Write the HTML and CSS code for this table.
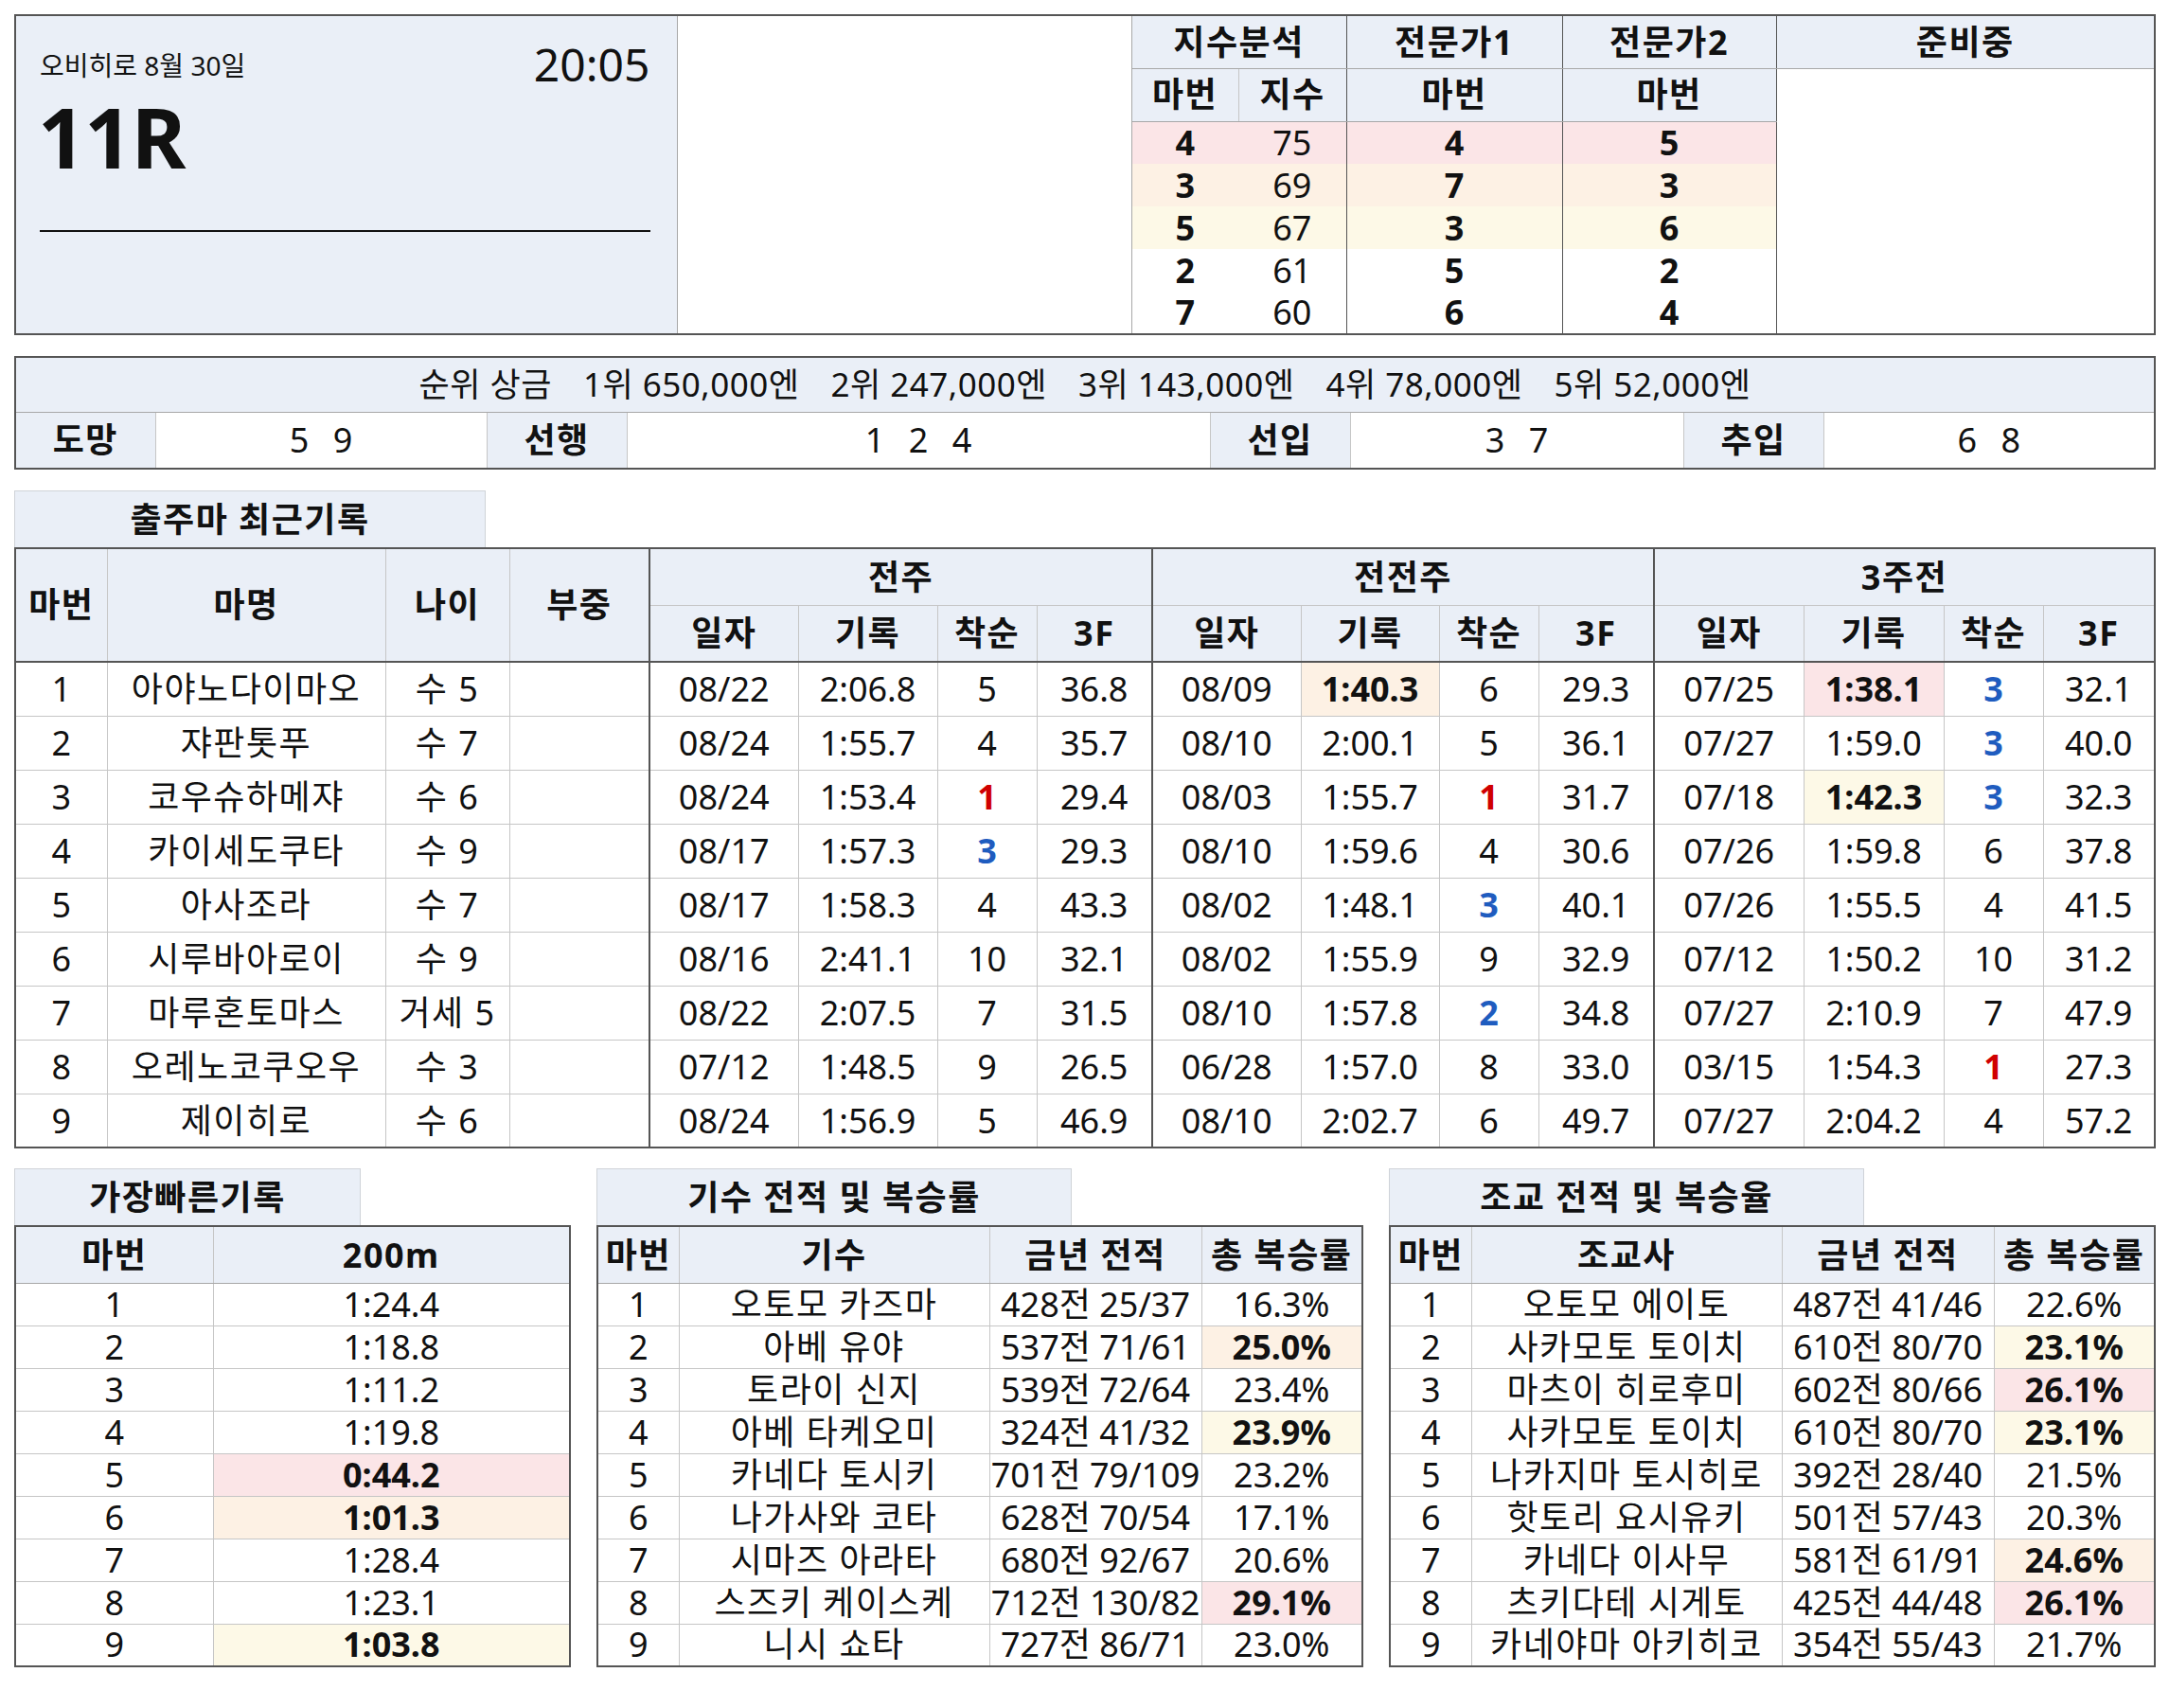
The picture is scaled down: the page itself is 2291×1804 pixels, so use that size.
FILE: index.html
```html
<!DOCTYPE html>
<html lang="ko">
<head>
<meta charset="utf-8">
<title>오비히로 11R</title>
<link rel="stylesheet" href="styles.css">
</head>
<body>
<div class="page">

  <table class="top">
    <colgroup>
      <col class="c-info"><col class="c-blank"><col class="c-ib"><col class="c-iv"><col class="c-e1"><col class="c-e2"><col>
    </colgroup>
    <tr class="th1">
      <td class="info" rowspan="7">
        <div class="info-head"><div class="venue">오비히로 8월 30일</div><div class="time">20:05</div></div>
        <div class="race">11R</div>
        <div class="rule"></div>
      </td>
      <td class="blank" rowspan="7"></td>
      <th colspan="2" class="lg">지수분석</th>
      <th class="ld">전문가1</th>
      <th class="ld">전문가2</th>
      <th class="ld">준비중</th>
    </tr>
    <tr class="th2">
      <th class="lg">마번</th><th class="lg">지수</th><th class="ld">마번</th><th class="ld">마번</th>
      <td class="prep ld" rowspan="6"></td>
    </tr>
    <tr class="td pink"><td class="b lg">4</td><td>75</td><td class="b ld">4</td><td class="b ld">5</td></tr>
    <tr class="td orange"><td class="b lg">3</td><td>69</td><td class="b ld">7</td><td class="b ld">3</td></tr>
    <tr class="td yellow"><td class="b lg">5</td><td>67</td><td class="b ld">3</td><td class="b ld">6</td></tr>
    <tr class="td"><td class="b lg">2</td><td>61</td><td class="b ld">5</td><td class="b ld">2</td></tr>
    <tr class="td"><td class="b lg">7</td><td>60</td><td class="b ld">6</td><td class="b ld">4</td></tr>
  </table>

  <table class="prize">
    <colgroup>
      <col class="c-l"><col class="c-v1"><col class="c-l"><col class="c-v2"><col class="c-l"><col class="c-v3"><col class="c-l"><col>
    </colgroup>
    <tr class="p1">
      <td colspan="8">
        <div class="prize-line">
          <span>순위 상금</span><span>1위 650,000엔</span><span>2위 247,000엔</span><span>3위 143,000엔</span><span>4위 78,000엔</span><span>5위 52,000엔</span>
        </div>
      </td>
    </tr>
    <tr class="p2">
      <th>도망</th><td class="spread">5 9</td>
      <th>선행</th><td class="spread">1 2 4</td>
      <th>선입</th><td class="spread">3 7</td>
      <th>추입</th><td class="spread">6 8</td>
    </tr>
  </table>

  <div class="tab tab-main">출주마 최근기록</div>
  <table class="main">
    <colgroup>
      <col class="m-no"><col class="m-name"><col class="m-age"><col class="m-wt">
      <col class="m-d1"><col class="m-r1"><col class="m-p"><col class="m-f1">
      <col class="m-d2"><col class="m-r2"><col class="m-p"><col class="m-f2">
      <col class="m-d3"><col class="m-r3"><col class="m-p"><col>
    </colgroup>
    <tr class="mh1">
      <th rowspan="2" class="hb">마번</th><th rowspan="2" class="hb">마명</th><th rowspan="2" class="hb">나이</th><th rowspan="2" class="hb">부중</th>
      <th colspan="4" class="gl">전주</th><th colspan="4" class="gl">전전주</th><th colspan="4" class="gl">3주전</th>
    </tr>
    <tr class="mh2">
      <th class="gl hb">일자</th><th class="hb">기록</th><th class="hb">착순</th><th class="hb">3F</th>
      <th class="gl hb">일자</th><th class="hb">기록</th><th class="hb">착순</th><th class="hb">3F</th>
      <th class="gl hb">일자</th><th class="hb">기록</th><th class="hb">착순</th><th class="hb">3F</th>
    </tr>
    <tr><td>1</td><td class="kn">아야노다이마오</td><td class="kn">수 5</td><td></td>
      <td class="gl">08/22</td><td>2:06.8</td><td>5</td><td>36.8</td>
      <td class="gl">08/09</td><td class="b orange-c">1:40.3</td><td>6</td><td>29.3</td>
      <td class="gl">07/25</td><td class="b pink-c">1:38.1</td><td class="blue">3</td><td>32.1</td></tr>
    <tr><td>2</td><td class="kn">쟈판톳푸</td><td class="kn">수 7</td><td></td>
      <td class="gl">08/24</td><td>1:55.7</td><td>4</td><td>35.7</td>
      <td class="gl">08/10</td><td>2:00.1</td><td>5</td><td>36.1</td>
      <td class="gl">07/27</td><td>1:59.0</td><td class="blue">3</td><td>40.0</td></tr>
    <tr><td>3</td><td class="kn">코우슈하메쟈</td><td class="kn">수 6</td><td></td>
      <td class="gl">08/24</td><td>1:53.4</td><td class="red">1</td><td>29.4</td>
      <td class="gl">08/03</td><td>1:55.7</td><td class="red">1</td><td>31.7</td>
      <td class="gl">07/18</td><td class="b yellow-c">1:42.3</td><td class="blue">3</td><td>32.3</td></tr>
    <tr><td>4</td><td class="kn">카이세도쿠타</td><td class="kn">수 9</td><td></td>
      <td class="gl">08/17</td><td>1:57.3</td><td class="blue">3</td><td>29.3</td>
      <td class="gl">08/10</td><td>1:59.6</td><td>4</td><td>30.6</td>
      <td class="gl">07/26</td><td>1:59.8</td><td>6</td><td>37.8</td></tr>
    <tr><td>5</td><td class="kn">아사조라</td><td class="kn">수 7</td><td></td>
      <td class="gl">08/17</td><td>1:58.3</td><td>4</td><td>43.3</td>
      <td class="gl">08/02</td><td>1:48.1</td><td class="blue">3</td><td>40.1</td>
      <td class="gl">07/26</td><td>1:55.5</td><td>4</td><td>41.5</td></tr>
    <tr><td>6</td><td class="kn">시루바아로이</td><td class="kn">수 9</td><td></td>
      <td class="gl">08/16</td><td>2:41.1</td><td>10</td><td>32.1</td>
      <td class="gl">08/02</td><td>1:55.9</td><td>9</td><td>32.9</td>
      <td class="gl">07/12</td><td>1:50.2</td><td>10</td><td>31.2</td></tr>
    <tr><td>7</td><td class="kn">마루혼토마스</td><td class="kn">거세 5</td><td></td>
      <td class="gl">08/22</td><td>2:07.5</td><td>7</td><td>31.5</td>
      <td class="gl">08/10</td><td>1:57.8</td><td class="blue">2</td><td>34.8</td>
      <td class="gl">07/27</td><td>2:10.9</td><td>7</td><td>47.9</td></tr>
    <tr><td>8</td><td class="kn">오레노코쿠오우</td><td class="kn">수 3</td><td></td>
      <td class="gl">07/12</td><td>1:48.5</td><td>9</td><td>26.5</td>
      <td class="gl">06/28</td><td>1:57.0</td><td>8</td><td>33.0</td>
      <td class="gl">03/15</td><td>1:54.3</td><td class="red">1</td><td>27.3</td></tr>
    <tr><td>9</td><td class="kn">제이히로</td><td class="kn">수 6</td><td></td>
      <td class="gl">08/24</td><td>1:56.9</td><td>5</td><td>46.9</td>
      <td class="gl">08/10</td><td>2:02.7</td><td>6</td><td>49.7</td>
      <td class="gl">07/27</td><td>2:04.2</td><td>4</td><td>57.2</td></tr>
  </table>

  <div class="bottom">
    <section class="panel p-fast">
      <div class="tab tab-fast">가장빠른기록</div>
      <table class="sub">
        <colgroup><col class="f-no"><col></colgroup>
        <tr class="sh"><th>마번</th><th>200m</th></tr>
        <tr><td>1</td><td>1:24.4</td></tr>
        <tr><td>2</td><td>1:18.8</td></tr>
        <tr><td>3</td><td>1:11.2</td></tr>
        <tr><td>4</td><td>1:19.8</td></tr>
        <tr><td>5</td><td class="b pink-c">0:44.2</td></tr>
        <tr><td>6</td><td class="b orange-c">1:01.3</td></tr>
        <tr><td>7</td><td>1:28.4</td></tr>
        <tr><td>8</td><td>1:23.1</td></tr>
        <tr><td>9</td><td class="b yellow-c">1:03.8</td></tr>
      </table>
    </section>

    <section class="panel p-jockey">
      <div class="tab tab-wide">기수 전적 및 복승률</div>
      <table class="sub">
        <colgroup><col class="s-no"><col class="s-name"><col class="s-rec"><col></colgroup>
        <tr class="sh"><th>마번</th><th>기수</th><th>금년 전적</th><th>총 복승률</th></tr>
        <tr><td>1</td><td class="kn">오토모 카즈마</td><td>428전 25/37</td><td>16.3%</td></tr>
        <tr><td>2</td><td class="kn">아베 유야</td><td>537전 71/61</td><td class="b orange-c">25.0%</td></tr>
        <tr><td>3</td><td class="kn">토라이 신지</td><td>539전 72/64</td><td>23.4%</td></tr>
        <tr><td>4</td><td class="kn">아베 타케오미</td><td>324전 41/32</td><td class="b yellow-c">23.9%</td></tr>
        <tr><td>5</td><td class="kn">카네다 토시키</td><td>701전 79/109</td><td>23.2%</td></tr>
        <tr><td>6</td><td class="kn">나가사와 코타</td><td>628전 70/54</td><td>17.1%</td></tr>
        <tr><td>7</td><td class="kn">시마즈 아라타</td><td>680전 92/67</td><td>20.6%</td></tr>
        <tr><td>8</td><td class="kn">스즈키 케이스케</td><td>712전 130/82</td><td class="b pink-c">29.1%</td></tr>
        <tr><td>9</td><td class="kn">니시 쇼타</td><td>727전 86/71</td><td>23.0%</td></tr>
      </table>
    </section>

    <section class="panel p-trainer">
      <div class="tab tab-wide">조교 전적 및 복승율</div>
      <table class="sub">
        <colgroup><col class="s-no"><col class="s-name"><col class="s-rec"><col></colgroup>
        <tr class="sh"><th>마번</th><th>조교사</th><th>금년 전적</th><th>총 복승률</th></tr>
        <tr><td>1</td><td class="kn">오토모 에이토</td><td>487전 41/46</td><td>22.6%</td></tr>
        <tr><td>2</td><td class="kn">사카모토 토이치</td><td>610전 80/70</td><td class="b yellow-c">23.1%</td></tr>
        <tr><td>3</td><td class="kn">마츠이 히로후미</td><td>602전 80/66</td><td class="b pink-c">26.1%</td></tr>
        <tr><td>4</td><td class="kn">사카모토 토이치</td><td>610전 80/70</td><td class="b yellow-c">23.1%</td></tr>
        <tr><td>5</td><td class="kn">나카지마 토시히로</td><td>392전 28/40</td><td>21.5%</td></tr>
        <tr><td>6</td><td class="kn">핫토리 요시유키</td><td>501전 57/43</td><td>20.3%</td></tr>
        <tr><td>7</td><td class="kn">카네다 이사무</td><td>581전 61/91</td><td class="b orange-c">24.6%</td></tr>
        <tr><td>8</td><td class="kn">츠키다테 시게토</td><td>425전 44/48</td><td class="b pink-c">26.1%</td></tr>
        <tr><td>9</td><td class="kn">카네야마 아키히코</td><td>354전 55/43</td><td>21.7%</td></tr>
      </table>
    </section>
  </div>

</div>
</body>
</html>
```

FILE: styles.css
```css
:root {
  --hd: #eaeff7;
  --pink: #fbe5e7;
  --orange: #fdf1e4;
  --yellow: #fdf9e7;
  --dark: #555555;
  --line: #c6c6c6;
  --mid: #a8a8a8;
}

* { box-sizing: border-box; }

body {
  margin: 0;
  background: #ffffff;
  color: #111111;
  font-family: "Noto Sans", "Noto Sans CJK KR", sans-serif;
}

.page {
  width: 2291px;
  padding: 15px 0 0 15px;
}

table {
  border-collapse: collapse;
  table-layout: fixed;
  font-size: 36px;
}

td, th {
  padding: 0;
  text-align: center;
  vertical-align: middle;
  line-height: 1.15;
  white-space: nowrap;
}

th {
  font-weight: 700;
  background: var(--hd);
  letter-spacing: 1.5px;
}

.kn { letter-spacing: 1.5px; }
.b { font-weight: 700; }
.red { color: #d00000; font-weight: 700; }
.blue { color: #1f5cbf; font-weight: 700; }
.pink-c { background: var(--pink); }
.orange-c { background: var(--orange); }
.yellow-c { background: var(--yellow); }

/* ---------- top box ---------- */
.top {
  width: 2262px;
  border: 2px solid var(--dark);
}
.c-info { width: 699px; }
.c-blank { width: 480px; }
.c-ib { width: 113px; }
.c-iv { width: 114px; }
.c-e1 { width: 228px; }
.c-e2 { width: 226px; }

.top .th1 { height: 56px; }
.top .th2 { height: 56px; }
.top .td { height: 45px; }

.top .th1 th { border-bottom: 1px solid var(--mid); }
.top .th2 th { border-bottom: 1px solid var(--mid); }
.top .th2 th + th { border-left: 1px solid var(--line); }
.top .lg { border-left: 1px solid var(--mid); }
.top .ld { border-left: 1px solid var(--dark) !important; }

.top .pink td { background: var(--pink); }
.top .orange td { background: var(--orange); }
.top .yellow td { background: var(--yellow); }

.info {
  background: var(--hd);
  vertical-align: top;
  text-align: left;
  border-right: 1px solid var(--mid);
  padding: 20px 28px 0 25px;
}
.info-head {
  display: flex;
  justify-content: space-between;
  align-items: flex-start;
  height: 55px;
}
.venue {
  font-size: 28px;
  line-height: 1.2;
  margin-top: 16px;
}
.time {
  font-size: 48px;
  line-height: 1.2;
  margin-top: 2px;
}
.race {
  font-size: 88px;
  font-weight: 700;
  line-height: 1.2;
  letter-spacing: -1px;
  margin-left: -2px;
}
.rule {
  margin-top: 45px;
  height: 2px;
  background: #111;
}
.blank { background: #fff; }
.prep { background: #fff; }

/* ---------- prize box ---------- */
.prize {
  width: 2262px;
  margin-top: 22px;
  border: 2px solid var(--dark);
}
.c-l { width: 148px; }
.c-v1 { width: 350px; }
.c-v2 { width: 616px; }
.c-v3 { width: 352px; }

.p1 { height: 58px; }
.p1 td {
  background: var(--hd);
  border-bottom: 1px solid var(--mid);
}
.prize-line {
  display: flex;
  justify-content: center;
  gap: 33px;
  font-size: 35px;
  letter-spacing: 0.5px;
}
.p2 { height: 60px; }
.p2 th, .p2 td { border-left: 1px solid var(--line); }
.p2 th:first-child { border-left: none; }
.spread { word-spacing: 16px; }

/* ---------- tabs ---------- */
.tab {
  height: 60px;
  background: var(--hd);
  border: 1px solid #cfd3d8;
  border-bottom: none;
  display: flex;
  align-items: center;
  justify-content: center;
  font-size: 36px;
  font-weight: 700;
  letter-spacing: 1.5px;
  line-height: 1.2;
}
.tab-main {
  width: 498px;
  margin-top: 22px;
}
.tab-fast { width: 366px; }
.tab-wide { width: 502px; }

/* ---------- main table ---------- */
.main {
  width: 2262px;
  border: 2px solid var(--dark);
}
.m-no { width: 97px; }
.m-name { width: 294px; }
.m-age { width: 131px; }
.m-wt { width: 148px; }
.m-d1 { width: 157px; }
.m-r1 { width: 147px; }
.m-p { width: 105px; }
.m-f1 { width: 122px; }
.m-d2 { width: 157px; }
.m-r2 { width: 146px; }
.m-f2 { width: 122px; }
.m-d3 { width: 158px; }
.m-r3 { width: 148px; }

.main th, .main td { border: 1px solid var(--line); }
.main .mh1 { height: 60px; }
.main .mh2 { height: 60px; }
.main .hb { border-bottom: 2px solid var(--dark); }
.main tr { height: 57px; }
.main .gl { border-left: 2px solid var(--dark); }

/* ---------- bottom tables ---------- */
.bottom {
  display: flex;
  gap: 27px;
  margin-top: 21px;
}
.p-fast { width: 588px; }
.p-jockey, .p-trainer { width: 810px; }

.sub {
  width: 100%;
  border: 2px solid var(--dark);
}
.sub th, .sub td { border: 1px solid var(--line); }
.sub .sh { height: 60px; }
.sub .sh th { border-bottom: 1px solid var(--mid); }
.sub tr { height: 45px; }
.sub td { line-height: 1.1; }
.f-no { width: 209px; }
.s-no { width: 86px; }
.s-name { width: 328px; }
.s-rec { width: 224px; }
```
